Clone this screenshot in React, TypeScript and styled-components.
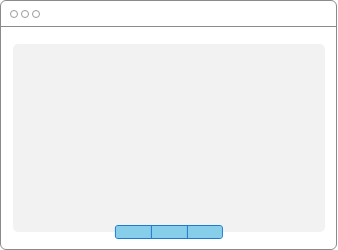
import * as React from "react";
import styled, { createGlobalStyle } from "styled-components";

const GlobalStyle = createGlobalStyle`
  html, body {
    margin: 0;
    padding: 0;
    background: #ffffff;
    font-family: "Liberation Sans", Arial, sans-serif;
  }
`;

const Window = styled.div`
  box-sizing: border-box;
  width: 337px;
  height: 250px;
  border: 1px solid #8a8a8a;
  border-radius: 6px;
  background: #ffffff;
  display: flex;
  flex-direction: column;
  overflow: hidden;
`;

const TitleBar = styled.div`
  box-sizing: border-box;
  height: 26px;
  flex: 0 0 26px;
  border-bottom: 1px solid #8a8a8a;
  display: flex;
  align-items: center;
  gap: 3px;
  padding-left: 9px;
`;

const Dot = styled.span`
  box-sizing: border-box;
  width: 8px;
  height: 8px;
  border: 1px solid #9a9a9a;
  border-radius: 50%;
`;

const Body = styled.div`
  flex: 1;
  display: flex;
  padding: 17px 11px 17px 12px;
`;

const Panel = styled.div`
  position: relative;
  flex: 1;
  background: #f2f2f2;
  border-radius: 5px;
`;

const ButtonGroup = styled.div`
  position: absolute;
  left: 50%;
  bottom: 0;
  transform: translate(-50%, 50%);
  display: flex;
  box-sizing: border-box;
  height: 14px;
  border: 1px solid #2079d2;
  border-radius: 3px;
  overflow: hidden;
  background: #87ceeb;
`;

const Segment = styled.button<{ $first?: boolean }>`
  box-sizing: border-box;
  width: 35.4px;
  height: 100%;
  margin: 0;
  padding: 0;
  border: none;
  border-left: ${(p) => (p.$first ? "none" : "1px solid #2079d2")};
  background: #87ceeb;
`;

export default function App() {
  return (
    <>
      <GlobalStyle />
      <Window>
        <TitleBar>
          <Dot />
          <Dot />
          <Dot />
        </TitleBar>
        <Body>
          <Panel>
            <ButtonGroup>
              <Segment $first />
              <Segment />
              <Segment />
            </ButtonGroup>
          </Panel>
        </Body>
      </Window>
    </>
  );
}
